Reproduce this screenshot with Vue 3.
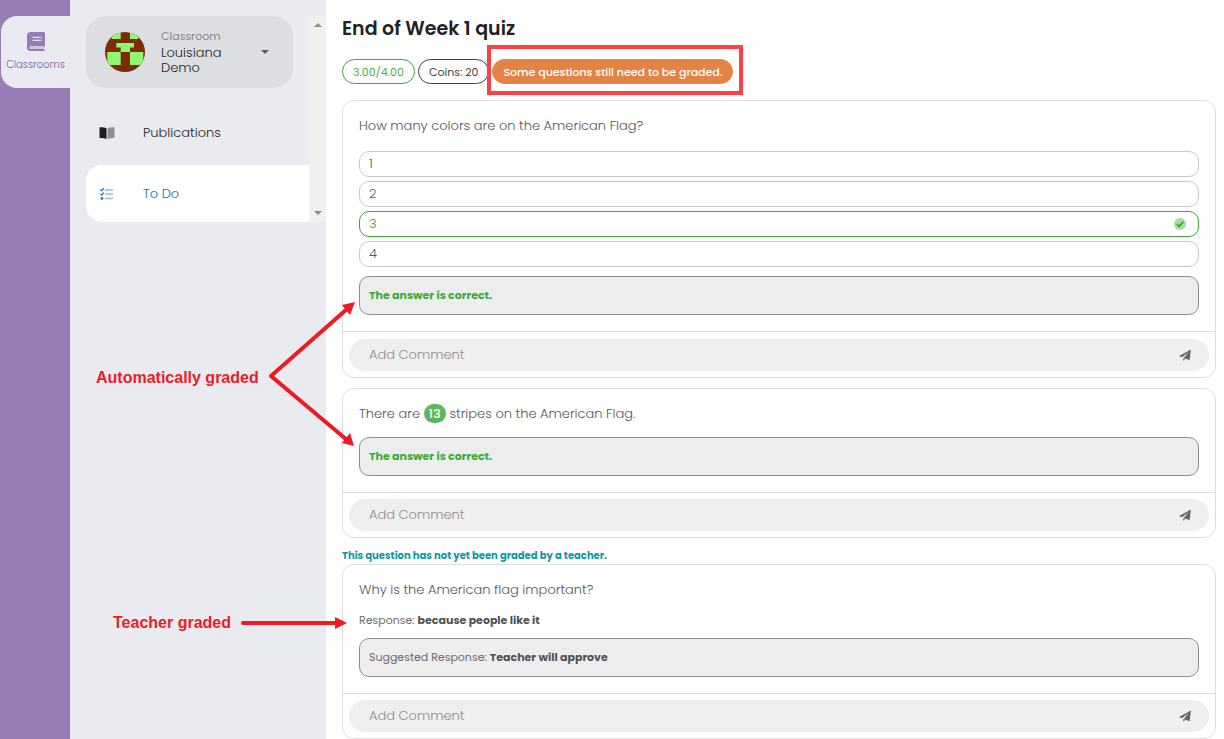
<script setup>
import { ref } from 'vue';

const options = [
  { label: '1', correct: false },
  { label: '2', correct: false },
  { label: '3', correct: true },
  { label: '4', correct: false },
];
const questions = [
  { id: 1, type: 'choice' },
  { id: 2, type: 'blank' },
  { id: 3, type: 'open' },
];
const comments = ref({ 1: '', 2: '', 3: '' });
</script>

<template>
  <div class="app">
    <nav class="rail">
      <a class="rail-item" href="#">
        <svg class="rail-icon" viewBox="0 0 18 20" aria-hidden="true">
          <path d="M3.500 0h13A1.500 1.500 0 0 1 18 1.500v12a1.500 1.500 0 0 1-1 1.400v2.200a1 1 0 0 1 0 1.900H3.500A3.500 3.500 0 0 1 0 15.500v-12A3.500 3.500 0 0 1 3.500 0z" fill="#967db6" />
          <path d="M3.800 14h13v3h-13a1.500 1.500 0 0 1 0-3z" fill="#cfc5de" />
          <path d="M5.500 5.300h9M5.500 8.300h9" stroke="#e4e0ee" stroke-width="1.200" />
        </svg>
        <span>Classrooms</span>
      </a>
    </nav>

    <aside class="sidebar">
      <div class="sidebar-list">
        <button class="switcher" type="button">
          <svg class="avatar" viewBox="0 0 40 40" aria-hidden="true">
            <defs>
              <clipPath id="avatar-clip"><circle cx="20" cy="20" r="20" /></clipPath>
            </defs>
            <g clip-path="url(#avatar-clip)">
              <rect width="40" height="40" fill="#7c2b0b" />
              <path
                d="M6.700 0h9v7h-9zM25 0h8.300v7H25zM11.300 11H29v4.500h-4V20h-9.300v-4.500h-4.400zM2.300 20h13.400v13H2.300zM25 20h13.300v13H25z"
                fill="#90f86f"
              />
            </g>
          </svg>
          <span class="switcher-text">
            <span class="switcher-kind">Classroom</span>
            <span>Louisiana Demo</span>
          </span>
          <svg class="caret" viewBox="0 0 8 4" aria-hidden="true"><path d="M0 0h8L4 4z" fill="#5c5d60" /></svg>
        </button>
        <a class="nav-item" href="#">
          <svg class="nav-icon" viewBox="0 0 16 14" aria-hidden="true">
            <path d="M.500 1.500C3 1 5 1.300 7.500 2.300V13C5 12 3 11.700.500 12z" fill="#1d1e20" />
            <path d="M15.500 1.500C13 1 11 1.300 8.500 2.300V13c2.500-1 4.500-1.300 7-1z" fill="#8f9092" />
          </svg>
          <span>Publications</span>
        </a>
        <a class="nav-item nav-item--active" href="#">
          <svg class="nav-icon" viewBox="0 0 16 14" aria-hidden="true">
            <path d="M6.500 3h7M6.500 7h7M6.500 11.500h7" stroke="#8fc0e2" stroke-width="1.500" stroke-linecap="round" />
            <path d="M1.500 2.800l1 1 2.300-2.500M1.500 7l1 1 2.300-2.500" fill="none" stroke="#1a7fc4" stroke-width="1.300" />
            <circle cx="3" cy="11.500" r="1.400" fill="#1a7fc4" />
          </svg>
          <span>To Do</span>
        </a>
      </div>
      <div class="scrollbar" aria-hidden="true">
        <svg viewBox="0 0 8 4"><path d="M0 4h8L4 0z" fill="#8c8c8c" /></svg>
        <svg viewBox="0 0 8 4"><path d="M0 0h8L4 4z" fill="#8c8c8c" /></svg>
      </div>
    </aside>

    <main class="main">
      <h1 class="title">End of Week 1 quiz</h1>
      <div class="badges">
        <span class="badge badge--score">3.00/4.00</span>
        <span class="badge">Coins: 20</span>
        <span class="badge badge--pending">Some questions still need to be graded.</span>
      </div>

      <template v-for="q in questions" :key="q.id">
        <p v-if="q.type === 'open'" class="notice">This question has not yet been graded by a teacher.</p>
        <section class="card" :class="`card--${q.type}`">
          <div class="card-body">
            <template v-if="q.type === 'choice'">
              <p class="question">How many colors are on the American Flag?</p>
              <ul class="options">
                <li
                  v-for="option in options"
                  :key="option.label"
                  class="option"
                  :class="{ 'option--correct': option.correct }"
                >
                  <span>{{ option.label }}</span>
                  <svg v-if="option.correct" class="check" viewBox="0 0 12 12" aria-hidden="true">
                    <circle cx="6" cy="6" r="6" fill="#a9dba4" />
                    <path d="M2.800 6.200l2.300 2.200 4.200-4.500" fill="none" stroke="#35a52e" stroke-width="1.600" />
                  </svg>
                </li>
              </ul>
              <p class="result result--correct">The answer is correct.</p>
            </template>

            <template v-else-if="q.type === 'blank'">
              <p class="question">There are <span class="blank">13</span> stripes on the American Flag.</p>
              <p class="result result--correct">The answer is correct.</p>
            </template>

            <template v-else>
              <p class="question">Why is the American flag important?</p>
              <p class="response">Response: <b>because people like it</b></p>
              <p class="result">Suggested Response: <b>Teacher will approve</b></p>
            </template>
          </div>

          <form class="comment" @submit.prevent>
            <div class="comment-field">
              <input v-model="comments[q.id]" class="comment-input" type="text" placeholder="Add Comment" aria-label="Add Comment" />
              <button class="send" type="submit" aria-label="Send">
                <svg viewBox="0 0 12 12" aria-hidden="true">
                  <path d="M12 .500L0 7l3 1.300L9.500 3 4.800 9 10.500 11.300z" fill="#666" />
                  <path d="M4.300 9l2 .800-2 2.200z" fill="#666" />
                </svg>
              </button>
            </div>
          </form>
        </section>
      </template>
    </main>

    <!-- callouts drawn over the page -->
    <div class="callout callout--auto">
      <span>Automatically graded</span>
      <svg class="fork" viewBox="0 0 88 144" aria-hidden="true">
        <path d="M79 7L3 74l76 64" fill="none" stroke="#ed1c24" stroke-width="4" stroke-linejoin="round" />
        <path d="M87 0L74 3l8 10zM86 144l-4-13-8 10z" fill="#ed1c24" />
      </svg>
    </div>
    <div class="callout callout--teacher">
      <span>Teacher graded</span>
      <svg class="arrow" viewBox="0 0 106 12" aria-hidden="true">
        <path d="M2 6h95" stroke="#ed1c24" stroke-width="4" stroke-linecap="round" />
        <path d="M94 0l12 6-12 6z" fill="#ed1c24" />
      </svg>
    </div>
  </div>
</template>

<style>
body {
  margin: 0;
  background: #fff;
}
</style>

<style scoped>
.app {
  position: relative;
  display: flex;
  min-height: 100vh;
  font-family: Poppins, Inter, sans-serif;
  font-size: 13px;
  font-weight: 300;
  color: #55575a;
}
.app * {
  box-sizing: border-box;
}
p,
h1,
ul {
  margin: 0;
  padding: 0;
}
b {
  color: #505255;
  font-weight: 700;
}
a {
  text-decoration: none;
}
button,
input {
  font: inherit;
  border: 0;
}

/* left rail */
.rail {
  flex: 0 0 70px;
  padding: 16px 0 0 1px;
  background: #967db6;
}
.rail-item {
  display: flex;
  flex-direction: column;
  align-items: center;
  gap: 5px;
  height: 72px;
  padding-top: 16px;
  border-radius: 16px 0 0 16px;
  background: #eaebf0;
  color: #7a5ca6;
  font-size: 10px;
  line-height: 16px;
}
.rail-icon {
  width: 18px;
  height: 20px;
}

/* sidebar */
.sidebar {
  display: flex;
  flex: 0 0 256px;
  align-items: flex-start;
  padding: 16px 0 0 16px;
  background: #eaebf0;
}
.sidebar-list {
  display: flex;
  flex: 1;
  flex-direction: column;
  gap: 4px;
}
.switcher {
  display: flex;
  align-items: center;
  height: 72px;
  margin: 0 16px 12px 0;
  padding: 0 24px 0 19px;
  border-radius: 20px;
  background: #dddee2;
  color: #1d1e22;
  line-height: 15px;
  text-align: left;
}
.avatar {
  flex: none;
  width: 40px;
  height: 40px;
}
.switcher-text {
  display: flex;
  flex-direction: column;
  width: 72px;
  margin: 0 auto 0 16px;
  padding-bottom: 1px;
}
.switcher-kind {
  color: #85868a;
  font-size: 11px;
  font-weight: 400;
  line-height: 17px;
}
.caret {
  width: 8px;
  height: 4px;
}
.nav-item {
  display: flex;
  align-items: center;
  gap: 28px;
  height: 57px;
  padding-left: 13px;
  border-radius: 16px 0 0 16px;
  color: #1d1e22;
}
.nav-item--active {
  background: #fff;
  color: #0a6fb8;
}
.nav-icon {
  width: 16px;
  height: 14px;
}
.scrollbar {
  display: flex;
  flex: 0 0 17px;
  flex-direction: column;
  align-items: center;
  align-self: flex-start;
  justify-content: space-between;
  height: 206px;
  padding: 7px 0;
  background: #f0f0f1;
}
.scrollbar svg {
  width: 8px;
  height: 4px;
}

/* quiz */
.main {
  flex: 1;
  min-width: 0;
  padding: 15px 8px 0 16px;
}
.title {
  color: #212224;
  font-size: 19px;
  font-weight: 600;
  line-height: 28px;
}
.badges {
  display: flex;
  gap: 3px;
  margin: 16px 0;
}
.badge {
  height: 25px;
  padding: 0 10px;
  border: 1px solid #404145;
  border-radius: 13px;
  color: #404145;
  font-size: 11px;
  font-weight: 400;
  line-height: 24px;
  white-space: nowrap;
}
.badge--score {
  border-color: #3aaa35;
  color: #4fb04a;
}
.badge--pending {
  position: relative;
  border-color: #e38444;
  background: #e38444;
  color: #fff;
  font-weight: 500;
}
.badge--pending::after {
  content: '';
  position: absolute;
  inset: -15px -11px -12px -6px;
  border: 4px solid #fb4144;
}
.card {
  margin-bottom: 10px;
  border: 1px solid #dedede;
  border-radius: 12px;
}
.card--open {
  margin-bottom: 0;
}
.card-body {
  display: flex;
  flex-direction: column;
  gap: 9px;
  padding: 13px 16px 16px;
}
.question {
  line-height: 24px;
}
.card--choice .question {
  margin-bottom: 4px;
}
.card--blank .question {
  margin-bottom: 2px;
}
.options {
  display: flex;
  flex-direction: column;
  gap: 4px;
  list-style: none;
}
.option {
  display: flex;
  align-items: center;
  justify-content: space-between;
  height: 26px;
  padding: 0 12px 0 9px;
  border: 1px solid #c8c8c8;
  border-radius: 10px;
}
.option--correct {
  border-color: #3aaa35;
  color: #3aaa35;
}
.check {
  width: 12px;
  height: 12px;
}
.result {
  padding: 9px;
  border: 1px solid #8e8e8e;
  border-radius: 10px;
  background: #ededed;
  color: #6a6c6f;
  font-size: 11px;
  font-weight: 400;
  line-height: 19px;
}
.result--correct {
  color: #3aaa35;
  font-weight: 700;
}
.response {
  color: #6a6c6f;
  font-size: 11px;
  font-weight: 400;
  line-height: 18px;
}
.blank {
  display: inline-block;
  padding: 0 5px;
  border-radius: 10px;
  background: #5cb85c;
  color: #fff;
  font-weight: 500;
  line-height: 19px;
}
.notice {
  color: #0f97a5;
  font-size: 10px;
  font-weight: 700;
  line-height: 16px;
}
.comment {
  padding: 6px;
  border-top: 1px solid #dedede;
}
.card--choice .comment {
  padding-top: 7px;
}
.comment-field {
  display: flex;
  align-items: center;
  height: 32px;
  padding: 0 18px 0 20px;
  border-radius: 16px;
  background: #efefef;
}
.comment-input {
  flex: 1;
  min-width: 0;
  padding: 0;
  outline: 0;
  background: none;
}
.comment-input::placeholder {
  color: #8d8d8d;
  opacity: 1;
}
.send {
  display: flex;
  padding: 0;
  background: none;
}
.send svg {
  width: 12px;
  height: 12px;
}

/* callouts */
.callout {
  position: absolute;
  display: flex;
  align-items: center;
  color: #ed1c24;
  font-family: 'Liberation Sans', Arial, sans-serif;
  font-size: 16px;
  font-weight: 700;
  white-space: nowrap;
  pointer-events: none;
}
.callout--auto {
  top: 302px;
  left: 96px;
  gap: 9px;
}
.callout--auto span {
  padding-top: 8px;
}
.callout--teacher {
  top: 614px;
  left: 113px;
  gap: 10px;
}
.fork {
  width: 88px;
  height: 144px;
}
.arrow {
  width: 106px;
  height: 12px;
}
</style>
